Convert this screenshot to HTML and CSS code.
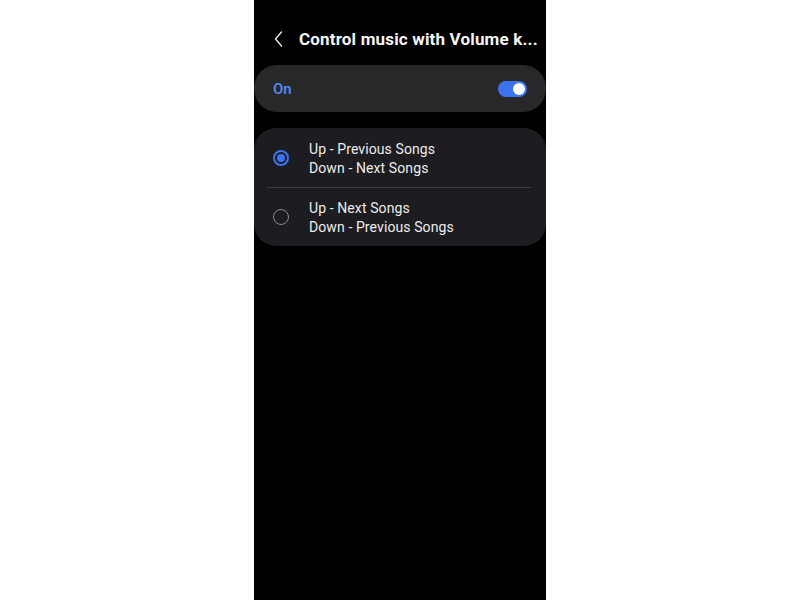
FILE: index.html
```html
<!DOCTYPE html>
<html>
<head>
<meta charset="utf-8">
<link rel="stylesheet" href="styles.css">
</head>
<body>
<div class="phone">
  <header class="header">
    <svg class="back" width="10" height="16" viewBox="0 0 10 16"><path d="M7.5 1 L1.5 8 L7.5 15" fill="none" stroke="#e8e8e8" stroke-width="1.4" stroke-linecap="round" stroke-linejoin="round"/></svg>
    <h1 class="title">Control music with Volume k...</h1>
  </header>
  <div class="card on-card">
    <span class="on-label">On</span>
    <span class="toggle"><span class="knob"></span></span>
  </div>
  <div class="card options">
    <div class="option first">
      <span class="radio checked"><span class="dot"></span></span>
      <div class="opt-text"><div>Up - Previous Songs</div><div>Down - Next Songs</div></div>
    </div>
    <div class="divider"></div>
    <div class="option">
      <span class="radio"></span>
      <div class="opt-text"><div>Up - Next Songs</div><div>Down - Previous Songs</div></div>
    </div>
  </div>
</div>
</body>
</html>
```
FILE: styles.css
```css
html, body { margin: 0; padding: 0; background: #ffffff; }
body { font-family: Roboto, "Noto Sans", sans-serif; }
.phone {
  width: 292px;
  height: 600px;
  margin: 0 auto;
  background: #000;
  display: flex;
  flex-direction: column;
}
.header {
  height: 65px;
  display: flex;
  align-items: center;
  padding-left: 20px;
  padding-top: 13px;
  box-sizing: border-box;
}
.back { display: block; margin-right: 15px; }
.title {
  margin: 0;
  color: #f4f4f4;
  font-size: 17px;
  font-weight: 700;
  white-space: nowrap;
  letter-spacing: 0.17px;
}
.card { border-radius: 23px; }
.on-card {
  background: #28282b;
  height: 47px;
  display: flex;
  align-items: center;
  justify-content: space-between;
  padding: 0 19px;
}
.on-label { color: #5583f2; font-size: 15px; font-weight: 600; }
.toggle {
  width: 29px; height: 16px;
  border-radius: 8px;
  background: #3d73ef;
  display: flex;
  align-items: center;
  justify-content: flex-end;
  padding-right: 2px;
  box-sizing: border-box;
}
.knob { width: 12px; height: 12px; border-radius: 50%; background: #fff; }
.options {
  margin-top: 16px;
  background: #1d1c20;
  border-radius: 22px;
}
.option {
  height: 58px;
  display: flex;
  align-items: center;
  padding-left: 19px;
}
.option.first { height: 59px; padding-top: 1px; box-sizing: border-box; }
.radio {
  width: 16px; height: 16px;
  box-sizing: border-box;
  border-radius: 50%;
  border: 1.5px solid #8a8a8e;
  display: flex; align-items: center; justify-content: center;
  margin-right: 20px;
  flex-shrink: 0;
}
.radio.checked { border: 2px solid #3d73ef; }
.dot { width: 8px; height: 8px; border-radius: 50%; background: #3d73ef; }
.opt-text { color: #ececec; font-size: 14px; line-height: 18.5px; letter-spacing: 0.1px; padding-top: 1px; }
.divider { height: 1px; background: #3a393e; margin: 0 15px 0 13px; }
```
